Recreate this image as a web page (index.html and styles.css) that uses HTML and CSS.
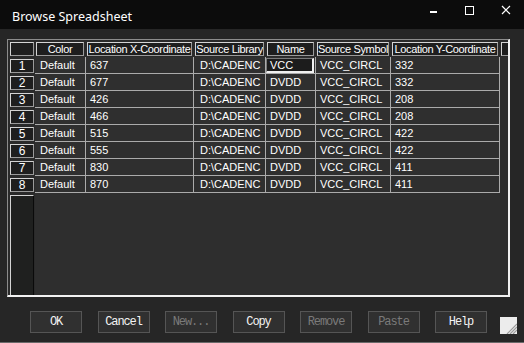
FILE: index.html
```html
<!DOCTYPE html>
<html lang="en">
  <head>
    <meta charset="UTF-8" />
    <title>Browse Spreadsheet</title>
    <link rel="stylesheet" href="styles.css">
  </head>
  <body>
    <div class="window">
      <div class="titlebar">
        <span class="title">Browse Spreadsheet</span>
        <svg class="controls" width="524" height="29" viewBox="0 0 524 29">
          <rect x="430" y="11" width="7" height="2" fill="#fff" />
          <rect x="465.5" y="6.5" width="8" height="8" fill="none" stroke="#fff" />
          <path d="M502 6 L510 14 M510 6 L502 14" stroke="#fff" stroke-width="1.2" />
        </svg>
      </div>

      <div class="frame">
        <div class="sheet">
          <!-- header row -->
          <div class="corner"><span></span></div>
          <div class="colhead"><span>Color</span></div>
          <div class="colhead"><span>Location X-Coordinate</span></div>
          <div class="colhead"><span>Source Library</span></div>
          <div class="colhead"><span>Name</span></div>
          <div class="colhead"><span>Source Symbol</span></div>
          <div class="colhead"><span>Location Y-Coordinate</span></div>
          <div class="colhead extra"><span></span></div>

          <div class="rowhead"><span>1</span></div>
          <div class="cell">Default</div><div class="cell">637</div><div class="cell">D:\CADENC</div>
          <div class="cell"><span class="focus">VCC</span></div><div class="cell">VCC_CIRCL</div><div class="cell">332</div><div class="gap"></div>

          <div class="rowhead"><span>2</span></div>
          <div class="cell">Default</div><div class="cell">677</div><div class="cell">D:\CADENC</div>
          <div class="cell">DVDD</div><div class="cell">VCC_CIRCL</div><div class="cell">332</div><div class="gap"></div>

          <div class="rowhead"><span>3</span></div>
          <div class="cell">Default</div><div class="cell">426</div><div class="cell">D:\CADENC</div>
          <div class="cell">DVDD</div><div class="cell">VCC_CIRCL</div><div class="cell">208</div><div class="gap"></div>

          <div class="rowhead"><span>4</span></div>
          <div class="cell">Default</div><div class="cell">466</div><div class="cell">D:\CADENC</div>
          <div class="cell">DVDD</div><div class="cell">VCC_CIRCL</div><div class="cell">208</div><div class="gap"></div>

          <div class="rowhead"><span>5</span></div>
          <div class="cell">Default</div><div class="cell">515</div><div class="cell">D:\CADENC</div>
          <div class="cell">DVDD</div><div class="cell">VCC_CIRCL</div><div class="cell">422</div><div class="gap"></div>

          <div class="rowhead"><span>6</span></div>
          <div class="cell">Default</div><div class="cell">555</div><div class="cell">D:\CADENC</div>
          <div class="cell">DVDD</div><div class="cell">VCC_CIRCL</div><div class="cell">422</div><div class="gap"></div>

          <div class="rowhead"><span>7</span></div>
          <div class="cell">Default</div><div class="cell">830</div><div class="cell">D:\CADENC</div>
          <div class="cell">DVDD</div><div class="cell">VCC_CIRCL</div><div class="cell">411</div><div class="gap"></div>

          <div class="rowhead"><span>8</span></div>
          <div class="cell">Default</div><div class="cell">870</div><div class="cell">D:\CADENC</div>
          <div class="cell">DVDD</div><div class="cell">VCC_CIRCL</div><div class="cell">411</div><div class="gap"></div>

          <div class="rowhead filler"><span></span></div>
          <div class="empty"></div>
        </div>
      </div>

      <div class="footer">
        <div class="buttons">
          <button class="btn">OK</button>
          <button class="btn">Cancel</button>
          <button class="btn" disabled>New...</button>
          <button class="btn">Copy</button>
          <button class="btn" disabled>Remove</button>
          <button class="btn" disabled>Paste</button>
          <button class="btn">Help</button>
        </div>
        <svg class="grip" width="17" height="17" viewBox="0 0 17 17">
          <rect width="17" height="17" fill="#ececec" />
          <path d="M17 7 L7 17 M17 10 L10 17 M17 13 L13 17" stroke="#9a9a9a" stroke-width="1.2" />
        </svg>
      </div>
    </div>
  </body>
</html>
```

FILE: styles.css
```css
* {
  margin: 0;
  padding: 0;
  box-sizing: border-box;
}

body {
  background: #262626;
  font-family: "Liberation Sans", Arial, sans-serif;
  width: 524px;
  height: 343px;
  overflow: hidden;
}

.window {
  height: 343px;
  border-bottom: 1px solid #6a6a6a;
}

.titlebar {
  height: 29px;
  background: #0c0c0c;
  position: relative;
  padding: 7px 0 0 12px;
}

.title {
  color: #fff;
  font-family: "Noto Sans", "Open Sans", sans-serif;
  font-size: 12.5px;
  line-height: 18px;
}

.controls {
  position: absolute;
  top: 0;
  left: 0;
}

.frame {
  margin: 10px 0 0 7px;
  width: 503px;
  height: 258px;
  border-top: 1px solid #8c8c8c;
  border-left: 1px solid #8c8c8c;
  border-right: 2px solid #f2f2f2;
  border-bottom: 2px solid #f2f2f2;
  overflow: hidden;
  background: #2e2e2e;
}

.sheet {
  display: grid;
  grid-template-columns: 27px 51px 108px 72px 50px 75px 109px 20px;
  grid-template-rows: 17px repeat(8, 17px) 1fr;
  height: 100%;
  width: 512px;
  font-size: 11px;
  color: #fff;
}

.corner,
.colhead,
.rowhead {
  display: flex;
  background: #2a2a2a;
}

.corner span,
.colhead span,
.rowhead span {
  flex: 1;
  display: flex;
  align-items: center;
  justify-content: center;
  background: #1e1e1e;
  border: 1px solid #d4d4d4;
  border-right-color: #9a9a9a;
  border-bottom-color: #9a9a9a;
  white-space: nowrap;
  overflow: hidden;
}

.corner span,
.rowhead span {
  margin: 2px 1px 1px 2px;
}

.colhead span {
  margin: 2px 2px 1px 1px;
  letter-spacing: -0.35px;
}

.colhead.extra span {
  margin-right: 0;
}

.rowhead span {
  font-size: 12px;
}

.rowhead.filler span {
  border-right-color: #0a0a0a;
  border-bottom: none;
  margin-bottom: 0;
  background: #1f201f;
}

.cell {
  background: #2f2f2f;
  border-right: 1px solid #ababab;
  border-bottom: 1px solid #ababab;
  padding-left: 4px;
  line-height: 17px;
  white-space: nowrap;
  overflow: hidden;
}

.cell:nth-child(8n + 2) {
  padding-left: 5px;
}

.cell:nth-child(8n + 4) {
  padding-left: 6px;
}

.focus {
  display: block;
  margin: 1px 1px 0 -4px;
  height: 15px;
  line-height: 13px;
  padding-left: 3px;
  border: 1px solid #7a7a7a;
  border-right: 2px solid #f0f0f0;
  border-bottom: 2px solid #f0f0f0;
  background: #1c1c1c;
}

.gap {
  background: #2e2e2e;
}

.empty {
  grid-column: 2 / 8;
}

.footer {
  display: flex;
  align-items: flex-start;
  padding: 14px 0 0 30px;
}

.buttons {
  display: flex;
  gap: 15.5px;
}

.btn {
  width: 52px;
  height: 22px;
  background: #303030;
  border: 1px solid #555;
  color: #f4f4f4;
  font-family: "Liberation Mono", "Courier New", monospace;
  font-size: 12px;
  letter-spacing: -1.1px;
}

.btn:disabled {
  color: #7a7a7a;
}

.grip {
  margin: 6px 0 0 13px;
}
```
